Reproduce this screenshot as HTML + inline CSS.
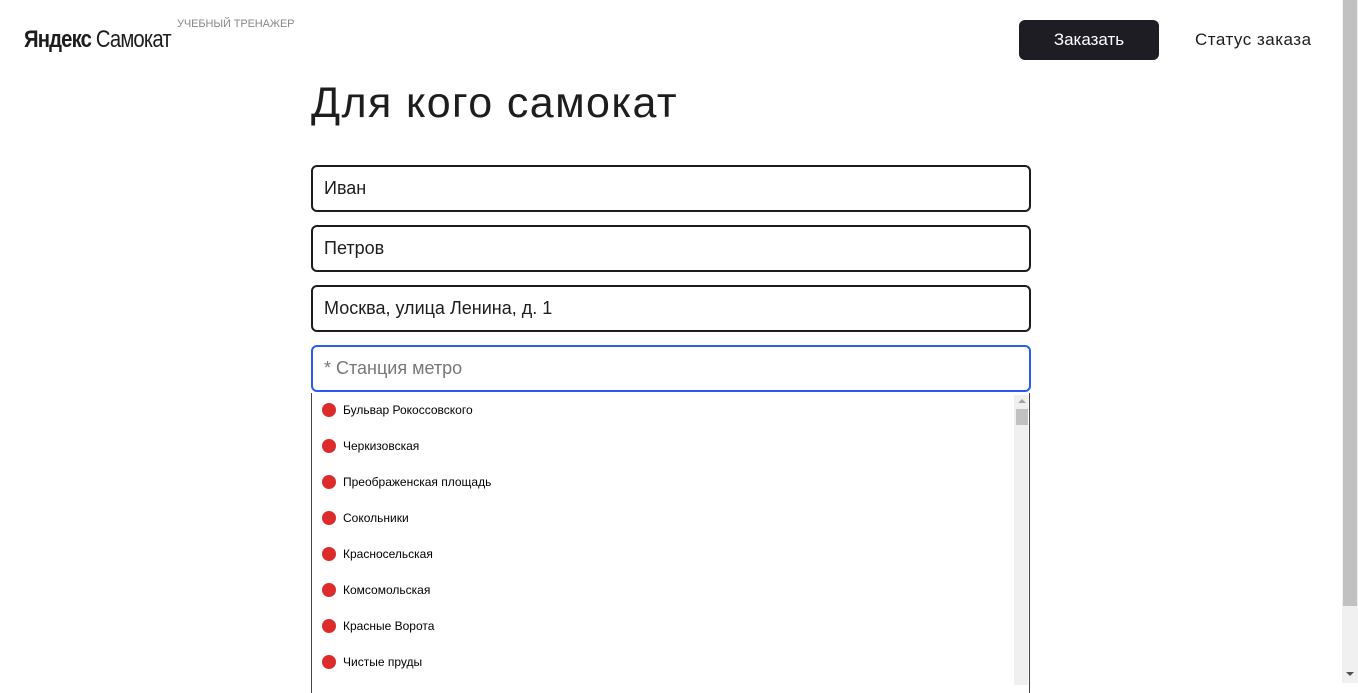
<!DOCTYPE html>
<html><head><meta charset="utf-8"><style>
body{margin:0;width:1358px;height:683px;overflow:hidden;background:#fff;font-family:"Liberation Sans",sans-serif;color:#1d1d1d;position:relative}
.a{position:absolute}
.inp{position:absolute;left:311px;height:43px;border:2px solid #1d1d1d;border-radius:6px;font-size:18px;line-height:43px;padding-left:11px;box-sizing:content-box;width:705px}
.item{position:absolute;left:322px;font-size:12px;color:#000}
.item:before{content:"";display:inline-block;width:14px;height:14px;border-radius:50%;background:#dd2b2b;vertical-align:-3px;margin-right:7px}
</style></head><body>
<div class="a" style="left:24px;top:26px;font-size:24px;letter-spacing:-1px;transform:scaleX(.845);transform-origin:left;"><b style="font-weight:bold">Яндекс</b> Самокат</div>
<div class="a" style="left:177px;top:18px;font-size:11px;color:#888;letter-spacing:-.1px">УЧЕБНЫЙ ТРЕНАЖЕР</div>
<div class="a" style="left:1019px;top:20px;width:140px;height:40px;background:#1d1d23;border-radius:6px;color:#fff;font-size:17px;line-height:40px;text-align:center">Заказать</div>
<div class="a" style="left:1195px;top:30px;font-size:17px;letter-spacing:.5px">Статус заказа</div>
<div class="a" style="left:311px;top:79px;font-size:43px;letter-spacing:1.4px">Для кого самокат</div>
<div class="inp" style="top:165px">Иван</div>
<div class="inp" style="top:225px">Петров</div>
<div class="inp" style="top:285px">Москва, улица Ленина, д. 1</div>
<div class="inp" style="top:345px;border-color:#2a5cf5;color:#777">* Станция метро</div>
<div class="a" style="left:311px;top:393px;width:717px;height:300px;border-left:1px solid #444;border-right:1px solid #444"></div>
<div class="a" style="left:1014px;top:395px;width:14px;height:290px;background:#f0f0f0"></div>
<div class="a" style="left:1016px;top:409px;width:12px;height:16px;background:#c1c1c1"></div>
<div class="a" style="left:1018px;top:399px;width:0;height:0;border:4px solid transparent;border-bottom-color:#a3a3a3;border-top:0"></div>
<div class="item" style="top:403px">Бульвар Рокоссовского</div>
<div class="item" style="top:439px">Черкизовская</div>
<div class="item" style="top:475px">Преображенская площадь</div>
<div class="item" style="top:511px">Сокольники</div>
<div class="item" style="top:547px">Красносельская</div>
<div class="item" style="top:583px">Комсомольская</div>
<div class="item" style="top:619px">Красные Ворота</div>
<div class="item" style="top:655px">Чистые пруды</div>
<div class="a" style="left:1342px;top:0;width:16px;height:683px;background:#f0f0f0"></div>
<div class="a" style="left:1343px;top:0;width:14px;height:606px;background:#c1c1c1"></div>
<div class="a" style="left:1346px;top:672px;width:0;height:0;border:4px solid transparent;border-top-color:#505050;border-bottom:0"></div>
</body></html>
